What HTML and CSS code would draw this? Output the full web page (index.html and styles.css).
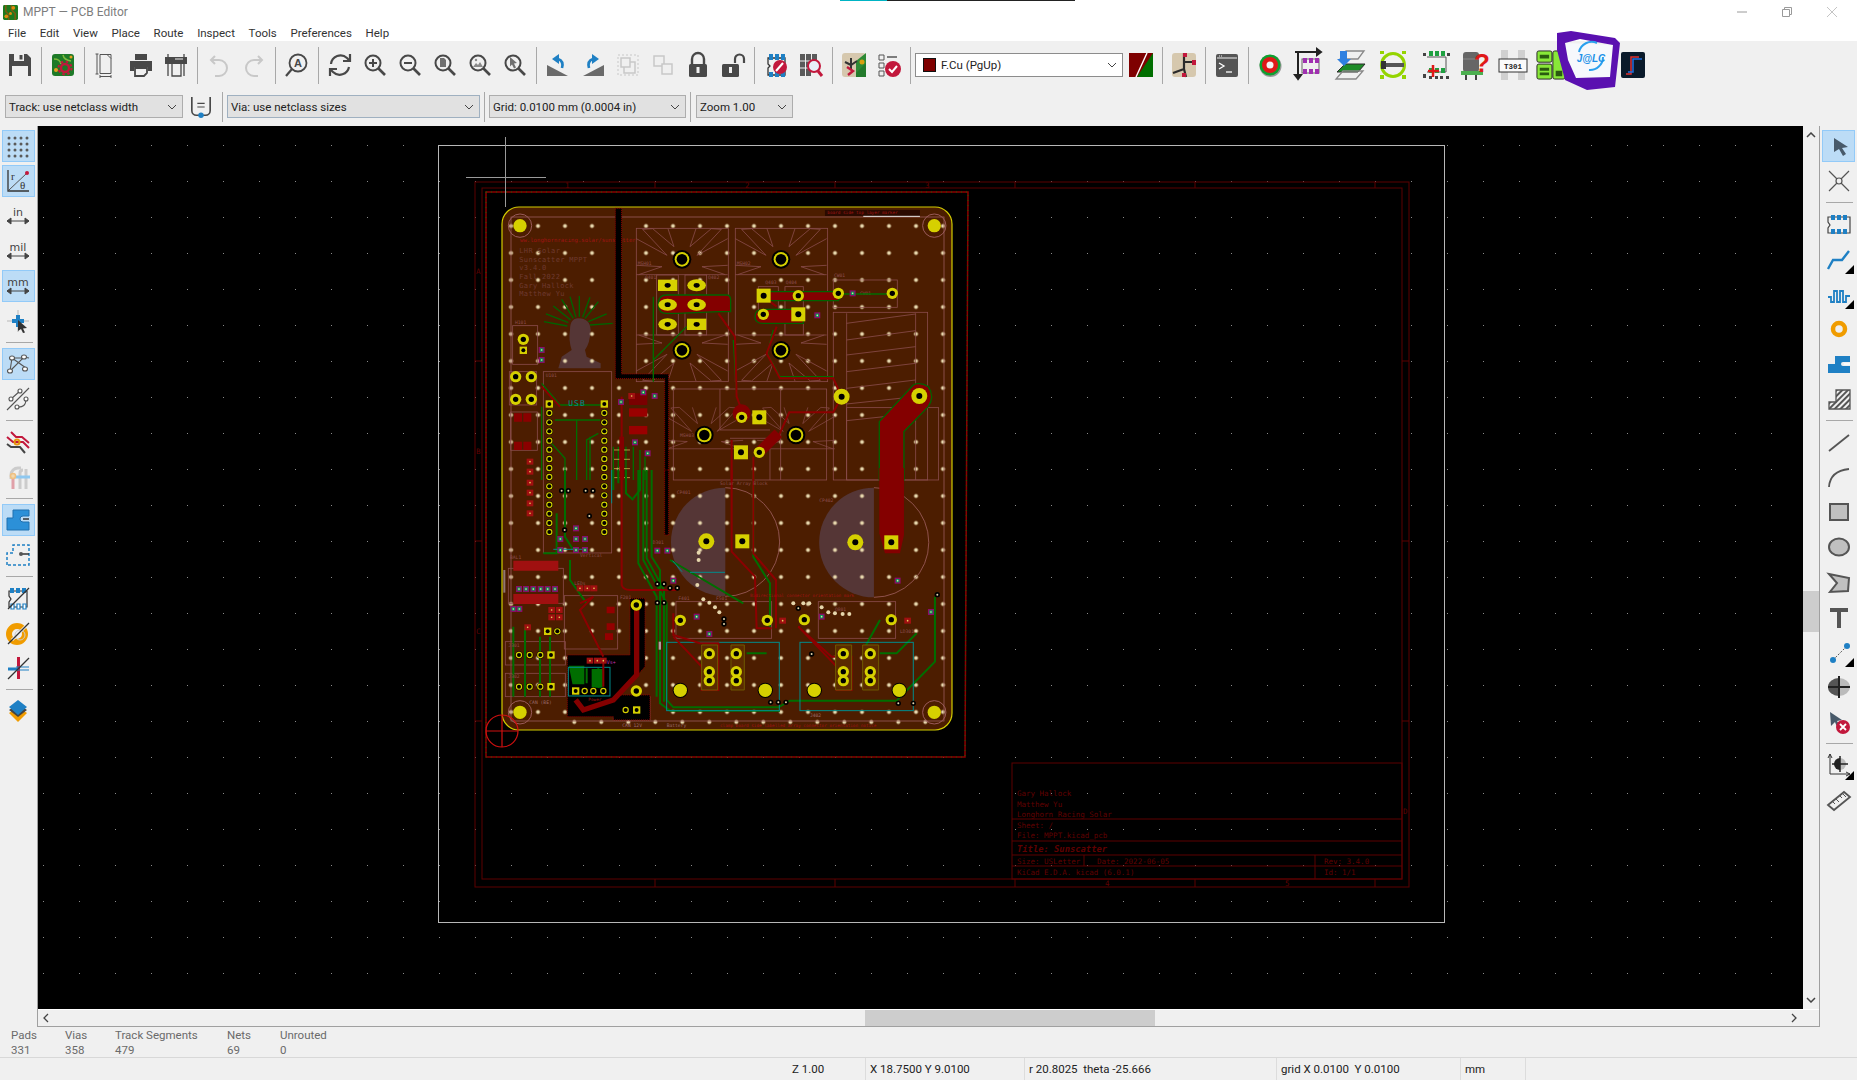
FILE: index.html
```html
<!DOCTYPE html>
<html lang="en">
<head>
<meta charset="utf-8">
<title>MPPT — PCB Editor</title>
<link rel="stylesheet" href="styles.css">
</head>
<body>
<svg class="defs" width="0" height="0" aria-hidden="true">
  <defs>
    <symbol id="chev" viewBox="0 0 10 6"><path d="M1 1l4 4 4-4" fill="none" stroke="#444" stroke-width="1"/></symbol>
    <g id="mag"><circle cx="10" cy="10" r="7.5" fill="none" stroke="#484848" stroke-width="2"/><path d="M15.5 15.5L22 22" stroke="#484848" stroke-width="2.6"/></g>
    <g id="slash"><path d="M2 23L23 2" stroke="#333" stroke-width="1.2"/></g>
    <pattern id="grid" width="36" height="36" patternUnits="userSpaceOnUse" x="7" y="1"><rect width="1" height="1" fill="#8a8a8a"/></pattern>
    <pattern id="stitch" width="27" height="27" patternUnits="userSpaceOnUse" x="11.5" y="23.5"><circle cx="13.5" cy="13.5" r="2" fill="#e6d6ac"/></pattern>
    <pattern id="stitch2" width="27" height="27" patternUnits="userSpaceOnUse" x="20.8" y="6.5"><circle cx="13.5" cy="13.5" r="2" fill="#e6d6ac"/></pattern>
    <pattern id="hatch" width="4" height="4" patternUnits="userSpaceOnUse" patternTransform="rotate(45)"><rect width="2" height="4" fill="#555"/></pattern>
    <g id="ring"><circle r="20" fill="#d6d000"/><circle r="35" fill="none" stroke="#9a5a5a" stroke-width="3"/></g>
    <g id="hs"><circle r="28" fill="#000"/><circle r="22" fill="#d6d000"/><circle r="16" fill="#000"/></g>
    <g id="pr"><circle r="17" fill="#d6d000"/><circle r="8" fill="#000"/></g>
    <g id="pl"><circle r="24" fill="#d6d000"/><circle r="9" fill="#000"/></g>
    <g id="ps"><rect x="-21" y="-21" width="42" height="42" fill="#d6d000"/><circle r="9" fill="#000"/></g>
    <g id="pb"><circle r="23" fill="#000"/><circle r="20" fill="#d6d000"/></g>
    <g id="po"><ellipse rx="28" ry="18" fill="#d6d000"/><ellipse rx="9" ry="7" fill="#000"/></g>
    <g id="pq"><rect x="-29" y="-17" width="58" height="34" fill="#d6d000"/><ellipse rx="9" ry="7" fill="#000"/></g>
    <g id="pin"><circle r="11" fill="#000"/><circle r="9.5" fill="#d6d000"/><circle r="6" fill="#000"/></g>
    <g id="pq2"><rect x="-11" y="-11" width="22" height="22" fill="#d6d000"/><circle r="6" fill="#000"/></g>
    <g id="vp"><rect x="-9" y="-9" width="18" height="18" fill="#8a0e6a"/><rect x="-5" y="-5" width="10" height="10" fill="#00a050"/><circle r="2.5" fill="#e6d6ac"/></g>
    <g id="vr"><rect x="-10" y="-9" width="20" height="18" fill="#a01010"/><circle r="2.5" fill="#e6d060"/></g>
    <g id="vb"><circle r="8" fill="#000"/><circle r="3" fill="#e6d6ac"/></g>
    <g id="dv"><circle r="6" fill="#e6d6ac"/></g>
    <g id="star" class="pcb-silk">
      <path d="M-137-62L-45-12-118-90-88-92-24-38-42-92M137-62L45-12 118-90 88-92 24-38 42-92M-137 18L-60 22-130 46M137 18L60 22 130 46M-137 46H137"/>
    </g>
    <g id="pins">
      <use href="#pin" y="27"/><use href="#pin" y="55"/><use href="#pin" y="82"/><use href="#pin" y="110"/><use href="#pin" y="137"/><use href="#pin" y="165"/><use href="#pin" y="192"/><use href="#pin" y="219"/><use href="#pin" y="247"/><use href="#pin" y="274"/><use href="#pin" y="302"/><use href="#pin" y="329"/><use href="#pin" y="357"/><use href="#pin" y="384"/>
    </g>
  </defs>
</svg>

<div class="app">
  <header class="titlebar">
    <svg class="app-icon" viewBox="0 0 16 16"><rect width="16" height="16" rx="1.5" fill="#1d7a1f"/><path d="M3 0v7l3 3v6M9 0v5l4 4v7" stroke="#7d5c10" stroke-width="1.6" fill="none"/><circle cx="3.5" cy="12" r="2" fill="#e08a10"/><circle cx="11" cy="3" r="2" fill="#e08a10"/><circle cx="8" cy="9" r="1.6" fill="#e08a10"/></svg>
    <span class="app-title">MPPT — PCB Editor</span>
    <div class="win-controls">
      <svg class="win-btn" viewBox="0 0 10 10"><path d="M0 5h10" stroke="#9a9a9a"/></svg>
      <svg class="win-btn" viewBox="0 0 10 10"><path d="M.5 2.5h7v7h-7zM2.5 2.5v-2h7v7h-2" fill="none" stroke="#9a9a9a"/></svg>
      <svg class="win-btn" viewBox="0 0 10 10"><path d="M0 0l10 10M10 0L0 10" stroke="#c4c4c4"/></svg>
    </div>
    <div class="accent"><i class="accent-teal"></i><i class="accent-dark"></i></div>
  </header>

  <nav class="menubar">
    <span>File</span><span>Edit</span><span>View</span><span>Place</span><span>Route</span><span>Inspect</span><span>Tools</span><span>Preferences</span><span>Help</span>
  </nav>

  <div class="toolbar-main">
    <span class="tb"><svg class="ic" viewBox="0 0 24 24"><path d="M1 1h18l4 4v18H1z" fill="#4a4a4a"/><rect x="6" y="1" width="10" height="7" fill="#f0f0f0"/><rect x="11.5" y="2" width="3" height="4.5" fill="#4a4a4a"/><rect x="4" y="13" width="16" height="10" fill="#f0f0f0"/></svg></span>
    <i class="vsep"></i>
    <span class="tb"><svg class="ic" viewBox="0 0 24 24"><rect x="1" y="1" width="22" height="22" rx="3" fill="#1e7a28"/><path d="M3 6q6 0 7 5M12 2q1 5 8 6" stroke="#7dba3c" fill="none" stroke-width="1.5"/><circle cx="5" cy="17" r="2" fill="#e8a020"/><circle cx="20" cy="4" r="1.5" fill="#e8a020"/><circle cx="14" cy="15" r="4" fill="none" stroke="#c2183c" stroke-width="2.5"/><circle cx="14" cy="15" r="6.500" fill="none" stroke="#c2183c" stroke-width="2" stroke-dasharray="2.5 2.600"/></svg></span>
    <i class="vsep"></i>
    <span class="tb"><svg class="ic" viewBox="0 0 24 24" fill="none" stroke="#555"><path d="M6 1.5h11v19H6zM13 1.5l4 4"/><path d="M3 1v20M1.5 1h3M1.5 21h3M6 23.5h11M6 22v3M17 22v3"/></svg></span>
    <span class="tb"><svg class="ic" viewBox="0 0 24 24"><rect x="6" y="1" width="12" height="6" fill="#484848"/><path d="M1 8h22v10h-4v-4H5v4H1z" fill="#484848"/><path d="M6 15h12v5l-3 3H6z" fill="none" stroke="#484848" stroke-width="1.8"/></svg></span>
    <span class="tb"><svg class="ic" viewBox="0 0 24 24"><path d="M1 4h22v7H1z" fill="#484848"/><path d="M4 1v22M20 1v22M8 10h9v13H8z" fill="none" stroke="#484848" stroke-width="1.3"/><path d="M11 6h8" stroke="#f0f0f0"/></svg></span>
    <i class="vsep"></i>
    <span class="tb"><svg class="ic" viewBox="0 0 24 24" fill="none" stroke="#c8c8c8" stroke-width="2"><path d="M8 3L4 7l4 4"/><path d="M4 7h8a7 7 0 0 1 0 16H8"/></svg></span>
    <span class="tb"><svg class="ic" viewBox="0 0 24 24" fill="none" stroke="#c8c8c8" stroke-width="2"><path d="M16 3l4 4-4 4"/><path d="M20 7h-8a7 7 0 0 0 0 16h4"/></svg></span>
    <i class="vsep"></i>
    <span class="tb"><svg class="ic" viewBox="0 0 24 24"><circle cx="13" cy="10" r="8.5" fill="none" stroke="#484848" stroke-width="1.8"/><path d="M7 16L1 23" stroke="#484848" stroke-width="2.2"/><text x="13" y="14" class="ic-a">A</text></svg></span>
    <i class="vsep"></i>
    <span class="tb"><svg class="ic" viewBox="0 0 24 24" fill="none" stroke="#484848" stroke-width="2.2"><path d="M3 11a9.5 9.5 0 0 1 16-6l3 3"/><path d="M22 1v7h-7"/><path d="M21 14a9.5 9.5 0 0 1-16 5l-3-3"/><path d="M2 23v-7h7"/></svg></span>
    <span class="tb"><svg class="ic" viewBox="0 0 24 24"><use href="#mag"/><path d="M10 6v8M6 10h8" stroke="#484848" stroke-width="2"/></svg></span>
    <span class="tb"><svg class="ic" viewBox="0 0 24 24"><use href="#mag"/><path d="M6 10h8" stroke="#484848" stroke-width="2"/></svg></span>
    <span class="tb"><svg class="ic" viewBox="0 0 24 24"><use href="#mag"/><path d="M7 5h4l2 2v7H7z" fill="#707070"/></svg></span>
    <span class="tb"><svg class="ic" viewBox="0 0 24 24"><use href="#mag"/><path d="M5 14l3-4 2 2 2-3 3 5z" fill="#8a8a8a"/><circle cx="8" cy="7" r="1.2" fill="#8a8a8a"/></svg></span>
    <span class="tb"><svg class="ic" viewBox="0 0 24 24"><use href="#mag"/><path d="M7 4l7 6-3 .5 2 4-2 1-2-4-2 2z" fill="#707070"/></svg></span>
    <i class="vsep"></i>
    <span class="tb"><svg class="ic" viewBox="0 0 24 24"><path d="M1 23V12l21 11z" fill="#6a6a6a"/><path d="M16 15Q18 8 12 6" fill="none" stroke="#1f80c4" stroke-width="2.6"/><path d="M13 1L6 6l7 5z" fill="#1f80c4"/></svg></span>
    <span class="tb"><svg class="ic" viewBox="0 0 24 24"><path d="M23 23V12L2 23z" fill="#6a6a6a"/><path d="M8 15Q6 8 12 6" fill="none" stroke="#1f80c4" stroke-width="2.6"/><path d="M11 1l7 5-7 5z" fill="#1f80c4"/></svg></span>
    <span class="tb"><svg class="ic" viewBox="0 0 24 24" fill="none" stroke="#c8c8c8"><rect x="2" y="2" width="20" height="20" stroke-dasharray="2 2"/><rect x="8" y="9" width="11" height="11" stroke-width="1.5"/><rect x="5" y="5" width="9" height="9" fill="#f0f0f0" stroke-width="1.5"/></svg></span>
    <span class="tb"><svg class="ic" viewBox="0 0 24 24" fill="none" stroke="#c8c8c8" stroke-width="1.5"><rect x="3" y="3" width="10" height="10"/><rect x="11" y="11" width="10" height="10" fill="#f0f0f0"/></svg></span>
    <span class="tb"><svg class="ic" viewBox="0 0 24 24"><path d="M6 11V6a6 6 0 0 1 12 0v5" fill="none" stroke="#484848" stroke-width="2.4"/><rect x="3" y="11" width="18" height="13" rx="1.5" fill="#484848"/><rect x="10.5" y="14" width="3" height="6" fill="#f0f0f0"/></svg></span>
    <span class="tb"><svg class="ic" viewBox="0 0 24 24"><path d="M14 10V6a4.5 4.5 0 0 1 9 0v4" fill="none" stroke="#484848" stroke-width="2.2"/><rect x="1" y="11" width="17" height="13" rx="1.5" fill="#484848"/><rect x="8" y="14" width="3" height="6" fill="#f0f0f0"/></svg></span>
    <i class="vsep"></i>
    <span class="tb"><svg class="ic" viewBox="0 0 24 24"><path d="M4 5h17v17H4v-7l2-2-2-2z" fill="none" stroke="#333" stroke-width="1.3"/><path d="M5 1h4v6H5zM11 1h4v6h-4zM17 1h4v6h-4zM5 19h4v5H5zM11 19h4v5h-4zM17 19h4v5h-4z" fill="#1f80c4"/><circle cx="16" cy="14" r="7" fill="#c2183c"/><path d="M12 18l7-8" stroke="#fff" stroke-width="2"/></svg></span>
    <span class="tb"><svg class="ic" viewBox="0 0 24 24"><rect x="1" y="1" width="5" height="22" fill="#5a5a5a"/><rect x="7" y="1" width="5" height="22" fill="#5a5a5a"/><rect x="13" y="1" width="5" height="6" fill="#5a5a5a"/><path d="M1 8h17M1 15h17" stroke="#f0f0f0"/><circle cx="15" cy="13" r="6" fill="#e8f0f8" stroke="#c2183c" stroke-width="2"/><path d="M19 18l4 5" stroke="#c2183c" stroke-width="3"/></svg></span>
    <i class="vsep"></i>
    <span class="tb"><svg class="ic" viewBox="0 0 24 24"><rect x="0" y="0" width="24" height="24" rx="3" fill="#d6c8ae"/><path d="M14 24V10h10v14z" fill="#237a2c"/><path d="M24 0v10L14 20V8z" fill="#2d8a35"/><circle cx="20" cy="9" r="2.5" fill="#d8a010"/><path d="M9 5v7M3 9l6 3 6-4M9 12v4" stroke="#333" stroke-width="2" fill="none"/><path d="M5 14l6 4-5 4" stroke="#c2183c" stroke-width="2.4" fill="none"/></svg></span>
    <span class="tb"><svg class="ic" viewBox="0 0 24 24"><path d="M2 2h5v5H2zM2 10h5v5H2zM2 18h5v5H2z" fill="none" stroke="#555"/><path d="M10 4h10M10 12h3" stroke="#555" stroke-width="1.3"/><circle cx="16" cy="16" r="8" fill="#c2183c"/><path d="M12 16l3 3 5-6" stroke="#fff" stroke-width="2" fill="none"/></svg></span>
    <i class="vsep"></i>
    <div class="combo-layer">
      <i class="swatch"></i><span>F.Cu (PgUp)</span>
      <svg class="chev"><use href="#chev"/></svg>
    </div>
    <span class="tb"><svg class="ic" viewBox="0 0 24 24"><rect width="24" height="24" fill="#7e0000"/><path d="M24 0v24H8z" fill="#006e00"/><path d="M7 24L18 0" stroke="#fff" stroke-width="1.4"/></svg></span>
    <i class="vsep"></i>
    <span class="tb"><svg class="ic" viewBox="0 0 24 24"><rect width="24" height="24" rx="3" fill="#d6c8ae"/><path d="M12 0v9M12 9v7M1 20l11-4M12 9l12 0M12 16l2 8" stroke="#2a2a2a" stroke-width="2.2" fill="none"/><path d="M11 0h4v4h-4zM20 7h4v5h-4zM10 20h4v4h-4z" fill="#c2183c"/></svg></span>
    <i class="vsep"></i>
    <span class="tb"><svg class="ic" viewBox="0 0 24 24"><rect x="1" y="1" width="22" height="23" rx="2" fill="#555"/><path d="M2 5h20" stroke="#f0f0f0"/><path d="M4 3h4" stroke="#f0f0f0" stroke-dasharray="1 1"/><path d="M4 10l5 3-5 3" fill="none" stroke="#fff" stroke-width="1.3"/><path d="M11 19h6" stroke="#fff" stroke-width="1.3"/></svg></span>
    <i class="vsep"></i>
    <span class="tb"><svg class="ic" viewBox="0 0 24 24"><circle cx="12.5" cy="13" r="11" fill="#999"/><circle cx="12" cy="12" r="10.5" fill="#0fa030"/><circle cx="12" cy="12" r="8" fill="#e01818"/><circle cx="12" cy="12" r="3.5" fill="#f4f4f4"/></svg></span>
    <span class="tb tb-w41"><svg class="ic ic-30" viewBox="0 0 30 30"><path d="M5 1v28M2 2h24M5 29l-3-4h6zM28 2l-4-3v6z" stroke="#222" stroke-width="2" fill="#222"/><rect x="9" y="9" width="17" height="14" fill="none" stroke="#666"/><path d="M10 8h4v5h-4zM16 8h4v5h-4zM22 8h4v5h-4zM10 19h4v5h-4zM16 19h4v5h-4zM22 19h4v5h-4z" fill="#a030b0"/></svg></span>
    <span class="tb tb-w43"><svg class="ic ic-30" viewBox="0 0 30 30"><path d="M11 1h18l-6 8H5z" fill="none" stroke="#888" stroke-width="1.3"/><path d="M10 14h20l-7 8H2z" fill="#1e8c28" stroke="#2a2a2a"/><path d="M8 21h20l-7 8H1z" fill="none" stroke="#888" stroke-width="1.3"/><path d="M5 1h7v8h4l-7 7-7-7h3z" fill="#2f80e0"/></svg></span>
    <span class="tb tb-w43"><svg class="ic ic-30" viewBox="0 0 30 30"><circle cx="15" cy="15" r="11.5" fill="none" stroke="#94d400" stroke-width="3"/><path d="M2 1h4v3H2zM24 1h4v3h-4zM2 25h4v4H2zM24 25h4v4h-4z" fill="#94d400"/><path d="M6 15h20" stroke="#555" stroke-width="4"/><rect x="3" y="11" width="5" height="8" fill="#333"/></svg></span>
    <span class="tb tb-w43"><svg class="ic ic-30" viewBox="0 0 30 30"><path d="M6 7h19v15H6" fill="none" stroke="#555"/><path d="M8 1h4v5H8zM14 1h4v5h-4zM20 1h4v5h-4zM8 18h4v5H8zM14 18h4v5h-4zM20 18h4v5h-4z" fill="#1ea040"/><path d="M2 24h3v4H2zM8 26h3v3H8zM19 26h3v3h-3zM25 26h3v3h-3zM2 3h3v3H2zM26 3h3v3h-3zM14 26h3v3h-3z" fill="#444"/><path d="M12 15v12M7 21h11" stroke="#e01818" stroke-width="2.5"/></svg></span>
    <span class="tb tb-w38"><svg class="ic ic-30" viewBox="0 0 30 30"><rect x="2" y="2" width="16" height="20" rx="3" fill="#666"/><path d="M2 9h16" stroke="#888"/><rect x="0" y="21" width="22" height="4" fill="#4caf50"/><path d="M5 25v5M15 25v5" stroke="#444" stroke-width="2"/><text x="21" y="22" class="ic-q">?</text></svg></span>
    <span class="tb"><svg class="ic ic-30" viewBox="0 0 30 30"><path d="M3 0h7v30H3zM20 0h7v30h-7z" fill="#d0d0d0"/><rect x="1" y="9" width="28" height="13" fill="#fafafa" stroke="#333"/><text x="15" y="18.5" class="ic-t">T301</text></svg></span>
    <span class="tb tb-w41"><svg class="ic ic-30" viewBox="0 0 30 32"><rect x="0" y="1" width="16" height="12" rx="2" fill="#88e838" stroke="#222"/><rect x="0" y="15" width="16" height="16" rx="2" fill="#88e838" stroke="#222"/><rect x="17" y="1" width="13" height="30" rx="2" fill="#88e838" stroke="#222"/><path d="M3 5h10v4H3zM3 19h10v3H3zM3 24h10v3H3zM20 22h7v6h-7z" fill="#2a5a10"/></svg></span>
    <span class="tb tb-w41"></span>
    <span class="tb tb-w41"><svg class="ic ic-26" viewBox="0 0 24 26"><rect width="24" height="26" rx="2" fill="#0a1a2a"/><path d="M5 22h5V5h8" fill="none" stroke="#e03030" stroke-width="1.5"/><path d="M7 20h5V7h9" fill="none" stroke="#2070e0" stroke-width="1.5"/></svg></span>
  </div>

  <svg class="jlc" viewBox="0 0 76 68">
    <path class="jlc-fill" d="M15 18L63 20 60 52 26 53 18 35z"/>
    <path class="jlc-ring" fill-rule="evenodd" d="M7 8L21 6 65 13 70 18 65 62 37 65 15 55 7 25zM15 18L18 35 26 53 60 52 63 20 30 14z"/>
    <path d="M29 27a13 13 0 0 1 18-9M53 32a13 13 0 0 1-14 13" fill="none" stroke="#2aa0ee" stroke-width="2"/>
    <text x="41" y="37" class="jlc-text">J@LC</text>
  </svg>

  <div class="toolbar-aux">
    <div class="combo combo-track"><span>Track: use netclass width</span><svg class="chev"><use href="#chev"/></svg></div>
    <span class="aux-ic"><svg class="ic" viewBox="0 0 24 24" fill="none"><path d="M2 1v15a5 5 0 0 0 5 5h10a5 5 0 0 0 5-5V1" stroke="#484848" stroke-width="1.8"/><path d="M8 8h8M8 12h8" stroke="#484848" stroke-width="1.2"/><circle cx="12" cy="21" r="3" fill="#1f80c4"/></svg></span>
    <i class="vsep vsep-aux"></i>
    <div class="combo combo-via"><span>Via: use netclass sizes</span><svg class="chev"><use href="#chev"/></svg></div>
    <i class="vsep vsep-aux"></i>
    <div class="combo combo-grid"><span>Grid: 0.0100 mm (0.0004 in)</span><svg class="chev"><use href="#chev"/></svg></div>
    <i class="vsep vsep-aux"></i>
    <div class="combo combo-zoom"><span>Zoom 1.00</span><svg class="chev"><use href="#chev"/></svg></div>
  </div>

  <div class="workspace">
    <aside class="side side-left">
      <span class="sb on"><svg class="ic" viewBox="0 0 24 24" fill="#5a5a5a"><circle cx="3" cy="4" r="1.5"/><circle cx="9" cy="4" r="1.5"/><circle cx="15" cy="4" r="1.5"/><circle cx="21" cy="4" r="1.5"/><circle cx="3" cy="10" r="1.5"/><circle cx="9" cy="10" r="1.5"/><circle cx="15" cy="10" r="1.5"/><circle cx="21" cy="10" r="1.5"/><circle cx="3" cy="16" r="1.5"/><circle cx="9" cy="16" r="1.5"/><circle cx="15" cy="16" r="1.5"/><circle cx="21" cy="16" r="1.5"/><circle cx="3" cy="22" r="1.5"/><circle cx="9" cy="22" r="1.5"/><circle cx="15" cy="22" r="1.5"/><circle cx="21" cy="22" r="1.5"/></svg></span>
      <span class="sb on"><svg class="ic" viewBox="0 0 24 24"><path d="M2 1v21h21" fill="none" stroke="#333" stroke-width="1.3"/><path d="M3 21L21 4" stroke="#555"/><circle cx="21" cy="4" r="2" fill="#c2183c"/><text x="5" y="11" class="ic-r">r</text><text x="14" y="20" class="ic-r">θ</text></svg></span>
      <span class="sb"><svg class="ic" viewBox="0 0 24 24"><text x="12" y="12" class="ic-u">in</text><path d="M1 17h22M5 14l-4 3 4 3zM19 14l4 3-4 3z" stroke="#444" fill="#444"/></svg></span>
      <span class="sb"><svg class="ic" viewBox="0 0 24 24"><text x="12" y="12" class="ic-u">mil</text><path d="M1 17h22M5 14l-4 3 4 3zM19 14l4 3-4 3z" stroke="#444" fill="#444"/></svg></span>
      <span class="sb on"><svg class="ic" viewBox="0 0 24 24"><text x="12" y="12" class="ic-u">mm</text><path d="M1 17h22M5 14l-4 3 4 3zM19 14l4 3-4 3z" stroke="#444" fill="#444"/></svg></span>
      <span class="sb"><svg class="ic" viewBox="0 0 24 24"><path d="M12 1v22M1 12h22" stroke="#aaa" stroke-width=".8"/><path d="M6 10h12v4H6zM10 6h4v12h-4z" fill="#1f80c4"/><path d="M12 11l9 8-4 .5 2 4-2 .5-2-4-3 2z" fill="#333"/></svg></span>
      <i class="hsep"></i>
      <span class="sb on"><svg class="ic" viewBox="0 0 24 24" fill="none" stroke="#555" stroke-width="1.1"><path d="M6 6l14 10M4 19L18 5l5 1M6 6h12M4 19l2-13"/><ellipse cx="6" cy="6" rx="2.5" ry="2" fill="#fff"/><ellipse cx="18" cy="5" rx="2.5" ry="2" fill="#fff"/><ellipse cx="4" cy="19" rx="2.5" ry="2" fill="#fff"/><ellipse cx="19" cy="17" rx="2.5" ry="2" fill="#fff"/></svg></span>
      <span class="sb"><svg class="ic" viewBox="0 0 24 24" fill="none" stroke="#555" stroke-width="1.1"><path d="M1 23L23 1M5 12L14 4M11 20q9 1 9-8"/><circle cx="5" cy="12" r="2" fill="#fff"/><circle cx="14" cy="4" r="2" fill="#fff"/><circle cx="11" cy="20" r="2" fill="#fff"/><circle cx="20" cy="12" r="2" fill="#fff"/></svg></span>
      <i class="hsep"></i>
      <span class="sb"><svg class="ic" viewBox="0 0 24 24" fill="none" stroke-width="2"><path d="M5 2l5 5h6l7 6" stroke="#c2183c"/><path d="M1 7l6 5h10l6 6" stroke="#c2183c"/><path d="M1 14l4 3h9l5 6" stroke="#444"/><circle cx="11" cy="12" r="2.5" stroke="#e8960c"/></svg></span>
      <span class="sb"><svg class="ic" viewBox="0 0 24 24" fill="none" stroke-width="3"><path d="M5 14V10a7 7 0 0 1 7-7h3" stroke="#ccc"/><path d="M14 24V8q0-3 3-3" stroke="#ccc"/><path d="M20 24V4" stroke="#ccc"/><path d="M7 12h17" stroke="#8ec8f0"/><path d="M7 24V14" stroke="#e0a0a8"/><circle cx="7" cy="11" r="2.5" fill="#f0d8b0" stroke="#f0c080" stroke-width="1.5"/></svg></span>
      <i class="hsep"></i>
      <span class="sb on"><svg class="ic" viewBox="0 0 24 24"><path d="M1 22V10h6V2h16v6h-6a3 3 0 0 0 0 6h6v8z" fill="#2c90d8" stroke="#1f70b0"/><path d="M23 11h-6" stroke="#333" stroke-width="1.5"/></svg></span>
      <span class="sb"><svg class="ic" viewBox="0 0 24 24"><path d="M1 22V10h6V2h16v20z" fill="none" stroke="#1f80c4" stroke-width="1.5" stroke-dasharray="3 2"/><path d="M14 11h9" stroke="#333" stroke-width="1.5"/><circle cx="15" cy="11" r="2" fill="#555"/></svg></span>
      <i class="hsep"></i>
      <span class="sb"><svg class="ic" viewBox="0 0 24 24"><path d="M3 5h18v16H3v-5l2-3-2-3z" fill="none" stroke="#333" stroke-width="1.2"/><path d="M4 2h4v5H4zM10 2h4v5h-4zM16 2h4v5h-4z" fill="#1f80c4"/><path d="M5 18h3v5H5zM11 18h3v5h-3zM17 18h3v5h-3z" fill="#fff" stroke="#1f80c4" stroke-width="1.2"/><use href="#slash"/></svg></span>
      <span class="sb"><svg class="ic" viewBox="0 0 24 24"><circle cx="11" cy="13" r="8" fill="none" stroke="#f09c00" stroke-width="6"/><path d="M6 19L22 3" stroke="#f0f0f0" stroke-width="3"/><circle cx="14" cy="14" r="5" fill="none" stroke="#ccc"/><use href="#slash"/></svg></span>
      <span class="sb"><svg class="ic" viewBox="0 0 24 24"><path d="M11 1h3v22h-3z" fill="#c2183c"/><path d="M2 13h10" stroke="#1f80c4" stroke-width="3"/><path d="M10 11h13M10 14h13" stroke="#1f80c4"/><use href="#slash"/></svg></span>
      <i class="hsep"></i>
      <span class="sb"><svg class="ic" viewBox="0 0 24 24"><path d="M12 8l9 6-9 9-9-9z" fill="#f09c00"/><path d="M12 5l9 6-9 7-9-7z" fill="#444"/><path d="M12 1l9 7-9 8-9-8z" fill="#1f80c4"/></svg></span>
    </aside>

    <div class="center">
      <div class="canvas-row">
        <svg class="canvas" viewBox="38 126 1765 883">
          <rect x="38" y="126" width="1765" height="883" fill="#000"/>
          <rect x="38" y="126" width="1765" height="883" fill="url(#grid)"/>

          <rect x="438.5" y="145.5" width="1006" height="777" class="page"/>
          <g class="wks">
            <rect x="475" y="182" width="934" height="705"/>
            <rect x="482" y="188" width="920" height="691"/>
            <rect x="1012" y="763" width="390" height="116"/>
            <path d="M1012 819H1402M1012 841H1402M1012 855H1402M1012 866H1402M1084 855V866M1315 855V879"/>
            <path d="M655 182V188M835 182V188M1015 182V188M1195 182V188M1375 182V188M655 879V887M835 879V887M1015 879V887M1195 879V887M1375 879V887M475 361H482M475 541H482M475 721H482M1402 361H1409M1402 541H1409M1402 721H1409"/>
          </g>
          <g class="wks-t">
            <text x="565" y="188">1</text><text x="745" y="188">2</text><text x="925" y="188">3</text><text x="1105" y="886">4</text><text x="1285" y="886">5</text>
            <text x="476" y="274">A</text><text x="476" y="454">B</text><text x="476" y="634">C</text><text x="1403" y="814">D</text>
            <text x="1017" y="796">Gary Hallock</text>
            <text x="1017" y="807">Matthew Yu</text>
            <text x="1017" y="817">Longhorn Racing Solar</text>
            <text x="1017" y="828">Sheet: /</text>
            <text x="1017" y="838">File: MPPT.kicad_pcb</text>
            <text x="1017" y="852" class="wks-title">Title: Sunscatter</text>
            <text x="1017" y="864">Size: USLetter</text>
            <text x="1097" y="864">Date: 2022-06-05</text>
            <text x="1324" y="864">Rev: 3.4.0</text>
            <text x="1017" y="875">KiCad E.D.A.  kicad (6.0.1)</text>
            <text x="1324" y="875">Id: 1/1</text>
          </g>

          <!-- board -->
          <path d="M486 192H968L965 757H486Z" class="keepout"/>
          <path d="M486 192H968L965 757H486Z" class="keepout2"/>
          <rect x="502" y="207" width="450" height="523" rx="17" fill="#4c1d00"/>

          <!-- filled silk sits under the stitching vias -->
          <g transform="translate(470 180) scale(.3333)">
            <path class="mauve" d="M300 450Q300 415 325 415 360 415 362 450 360 490 345 510L350 530 392 550V565H265L275 530 305 510Q295 480 300 450Z"/>
          </g>
          <g transform="translate(470 470) scale(.3333)">
            <path class="mauve" d="M766 53A163 163 0 0 0 766 379Z"/>
            <path class="mauve" d="M1212 53A163 163 0 0 0 1212 382Z"/>
          </g>

          <rect x="497.5" y="212.5" width="459" height="513" fill="url(#stitch)"/>
          <rect x="560" y="718" width="368" height="8" fill="url(#stitch2)"/>
          <rect x="511" y="217" width="433" height="504" class="pcb-silk-p"/>
          <rect x="502" y="207" width="450" height="523" rx="17" class="edge"/>

          <g transform="translate(470 180) scale(.3333)">
            <!-- heatsinks -->
            <g class="pcb-silk">
              <rect x="499" y="145" width="276" height="460"/><rect x="796" y="145" width="277" height="460"/>
              <rect x="610" y="627" width="460" height="273"/>
              <path d="M750 627V750H900M932 627V900M780 775H900V900"/>
              <rect x="560" y="285" width="65" height="180"/><rect x="645" y="285" width="65" height="180"/>
              <rect x="865" y="320" width="60" height="80"/><rect x="945" y="320" width="55" height="145"/>
              <rect x="1090" y="300" width="192" height="82"/>
              <rect x="1090" y="397" width="283" height="503"/>
              <path d="M1130 400V900M1337 400V900M1130 430L1337 402M1130 480L1337 452M1130 525L1337 500M1130 575L1337 550M1130 625L1337 600M1130 672L1337 650M1130 722L1337 700"/>
              <rect x="1130" y="683" width="276" height="217"/>
              <rect x="128" y="437" width="75" height="116"/>
              <rect x="118" y="575" width="82" height="100"/>
              <rect x="220" y="575" width="205" height="544"/>
              <rect x="122" y="696" width="80" height="115"/>
            </g>
            <use href="#star" x="636" y="238"/><use href="#star" x="933" y="238"/>
            <use href="#star" transform="translate(636 511) scale(1 -1)"/><use href="#star" transform="translate(933 511) scale(1 -1)"/>
            <use href="#star" transform="translate(703 765) scale(.85 .9)"/><use href="#star" transform="translate(978 765) scale(.85 .9)"/>

            <path class="gr3" d="M222 425L292 438M228 402L295 428M250 378L302 420M275 358L310 415M300 350L318 412M328 348V410M360 352L338 412M385 365L345 415M410 402L355 425M428 430L360 435"/>

            <!-- silk text -->
            <g class="silk-t">
              <text x="148" y="218">LHR Solar</text>
              <text x="148" y="245">Sunscatter MPPT</text>
              <text x="148" y="271">v3.4.0</text>
              <text x="148" y="296">Fall 2022</text>
              <text x="148" y="323">Gary Hallock</text>
              <text x="148" y="349">Matthew Yu</text>
            </g>
            <text x="150" y="186" class="red-t">ww.longhornracing.solar/sunscatter</text>
            <rect x="1065" y="90" width="285" height="18" fill="#2a0a00"/>
            <path d="M1180 109H1350" stroke="#e8e8e8" stroke-width="3"/>
            <text x="1072" y="102" class="red-t red-s">board side top layer marker</text>
            <g class="tiny">
              <text x="503" y="254">MSH01</text><text x="800" y="254">MSH02</text><text x="525" y="298">Q401</text><text x="714" y="298">Q402</text><text x="886" y="313">Q403</text><text x="947" y="313">Q404</text><text x="1092" y="292">CW01</text><text x="1170" y="346">CW01</text><text x="227" y="592">U101</text><text x="135" y="432">H101</text><text x="630" y="770">MSH03</text>
            </g>

            <!-- isolation slot -->
            <path class="slot" d="M436 85H455V582H596V900H584V596H436Z"/>

            <!-- green -->
            <g class="gr">
              <path d="M550 350V605M620 470L550 540V600M650 440L560 530M910 450L892 520 930 590H1090M215 610L270 675H400M360 770V900M385 760L350 780V900M255 720H390M215 680V900M1120 342H1265"/>
              <path d="M790 480L800 640M850 830V900"/>
              <path d="M240 785L285 835V900M320 720V900M430 800V900M445 800V900M468 800V900M490 800V900M510 810V900M525 830V900"/>
            </g>

            <!-- copper -->
            <path class="cu" d="M590 345H770Q782 345 782 360V395H745L620 400H590Q565 400 565 372 565 345 590 345Z"/>
            <path class="cu" d="M868 335H1100L1120 340 1105 362H868Z"/>
            <path class="cu" d="M880 388H1000V430H880Q855 430 855 410 855 388 880 388Z"/>
            <path class="cu" d="M1330 615Q1350 605 1375 620 1395 650 1375 680L1302 755V900H1228V725Z"/>
            <g class="trk">
              <path d="M745 400L795 470 800 650 815 690"/>
              <path d="M920 440L890 520 930 595H1090L1115 650"/>
              <path d="M1115 650L1090 697H958L925 770"/>
              <path d="M455 650V900"/>
              <path d="M785 780V900M850 830V900"/>
              <path d="M215 620L270 680M900 365L920 380"/>
            </g>
            <circle cx="815" cy="700" r="27" fill="#840000"/>
            <path d="M868 817L925 760" stroke="#840000" stroke-width="32"/>
            <path d="M432 810H480M432 838H480M432 866H480M432 893H480" stroke="#e8d060" stroke-width="2"/>
            <rect x="448" y="770" width="14" height="130" fill="#840000"/>
            <rect x="477" y="640" width="55" height="35" fill="#7a0000"/>
            <rect x="477" y="685" width="55" height="25" fill="#9a0000"/>
            <rect x="477" y="738" width="55" height="25" fill="#9a0000"/>
            <path d="M132 700h24v25h-24zM160 700h24v25h-24zM132 785h24v25h-24zM160 785h24v25h-24z" fill="#8a0000"/>

            <!-- pads -->
            <use href="#ring" x="150" y="137"/><use href="#ring" x="1393" y="137"/>
            <use href="#hs" x="636" y="238"/><use href="#hs" x="933" y="238"/><use href="#hs" x="636" y="511"/><use href="#hs" x="933" y="511"/><use href="#hs" x="703" y="765"/><use href="#hs" x="978" y="765"/>
            <use href="#pq" x="593" y="316"/><use href="#po" x="680" y="316"/><use href="#po" x="593" y="374"/><use href="#po" x="680" y="374"/><use href="#po" x="593" y="433"/><use href="#pq" x="680" y="433"/>
            <use href="#ps" x="881" y="347"/><use href="#pr" x="985" y="347"/><use href="#pr" x="1105" y="340"/><use href="#pr" x="1267" y="340"/>
            <use href="#pr" x="880" y="403"/><use href="#ps" x="985" y="403"/>
            <use href="#vp" x="1148" y="340"/><use href="#vp" x="1042" y="406"/><use href="#vp" x="215" y="510"/><use href="#vp" x="215" y="540"/><use href="#vp" x="520" y="637"/><use href="#vp" x="554" y="648"/><use href="#vp" x="453" y="666"/><use href="#vp" x="495" y="787"/><use href="#vp" x="533" y="820"/>
            <use href="#vr" x="485" y="648"/><use href="#vr" x="180" y="845"/><use href="#vr" x="180" y="875"/>
            <use href="#pl" x="1115" y="650"/><use href="#pl" x="1348" y="648"/>
            <use href="#pr" x="160" y="478"/><use href="#pq2" x="160" y="511"/>
            <use href="#pr" x="137" y="590"/><use href="#pr" x="184" y="590"/><use href="#pr" x="137" y="658"/><use href="#pr" x="184" y="658"/>
            <use href="#pr" x="815" y="712"/><use href="#ps" x="868" y="712"/><use href="#ps" x="813" y="817"/><use href="#pr" x="868" y="817"/>
            <use href="#pq2" x="238" y="672"/><use href="#pq2" x="403" y="672"/>
            <use href="#pins" x="238" y="672"/><use href="#pins" x="403" y="672"/>
            <text x="295" y="678" class="teal-t">USB</text>
          </g>

          <g transform="translate(470 470) scale(.3333)">
            <g class="pcb-silk pk">
              <path d="M766 53A163 163 0 0 1 766 379"/>
              <path d="M1212 53A163 163 0 0 1 1212 382"/>
              <rect x="106" y="515" width="180" height="70"/><rect x="106" y="610" width="180" height="70"/>
              <rect x="115" y="295" width="165" height="105"/>
              <rect x="283" y="377" width="160" height="160"/>
              <rect x="618" y="395" width="287" height="110"/>
              <rect x="1045" y="395" width="232" height="110"/>
              <rect x="430" y="680" width="110" height="70"/>
            </g>
            <!-- black zone -->
            <path class="slot" d="M584 0H596V195H584Z"/>
            <path class="slot" d="M480 385H525V590L450 675H540V750H430V740H292V555H480Z"/>
            <!-- green bundle -->
            <g class="gr gr-b">
              <path d="M520 0V270L590 400V690L610 712H925L960 692H1280L1395 575V380"/>
              <path d="M545 0V260L570 300V700L600 722H930"/>
              <path d="M505 0V280L560 380V680"/>
              <path d="M530 0V265L582 360V695"/>
              <path d="M850 0V260L900 340V470M1230 450L1180 540"/>
              <path d="M600 270L820 400M830 550H890M1230 550H1280L1340 490"/>
              <path d="M300 270V330L350 400M130 470V680M165 470V680M210 500V680M240 500V680M260 130V250H220"/>
              <path d="M285 0V200L310 240M430 0V60M445 0V40M468 0V70L490 90M510 0V60L490 85"/>
              <path d="M350 595V640M385 595V650L370 640"/>
              <path d="M300 590H340V640H310ZM368 600H395V650H368Z" class="gr-fill"/>
            </g>
            <!-- teal -->
            <g class="teal">
              <path d="M608 272L636 305M660 307H765"/>
              <rect x="590" y="517" width="338" height="205"/>
              <rect x="990" y="517" width="340" height="205"/>
              <rect x="295" y="592" width="125" height="86"/>
              <path d="M250 238H340M425 0V100"/>
            </g>
            <!-- red -->
            <g class="trk">
              <path d="M455 0V345Q460 360 480 360H620"/>
              <path d="M785 0V245L855 320 860 475H905"/>
              <path d="M850 0V250L918 330V475"/>
              <path d="M610 430V495L690 520H745V660H695V590L610 500"/>
              <path d="M985 470L1085 560H1145V660H1100V590L985 470"/>
              <path d="M330 400L370 380 330 420 400 560"/>
              <path d="M400 570V650"/>
            </g>
            <path d="M1228 -6H1302V195L1290 250H1245L1228 190Z" fill="#840000"/>
            <path d="M500 405V615L430 690 340 720 317 690" class="thick"/>
            <path d="M130 272h135v30H130zM130 372h135v30H130z" fill="#a01010"/>
            <path d="M410 410h24v20h-24zM410 460h24v20h-24zM405 490h24v20h-24z" fill="#940000"/>
            <path d="M783 525h40v135h-40z" class="slotp"/>
            <path d="M695 525h48v135h-48zM1097 525h48v135h-48zM1178 525h48v135h-48z" class="slotp"/>
            <!-- pads -->
            <use href="#ring" x="150" y="727"/><use href="#ring" x="1393" y="727"/>
            <use href="#pl" x="709" y="214"/><use href="#ps" x="817" y="214"/><use href="#pl" x="1156" y="217"/><use href="#ps" x="1264" y="217"/>
            <use href="#pr" x="631" y="451"/><use href="#pr" x="892" y="451"/><use href="#pr" x="1003" y="449"/><use href="#pr" x="1264" y="449"/>
            <use href="#pr" x="718" y="551"/><use href="#pr" x="718" y="605"/><use href="#pr" x="718" y="632"/><use href="#pr" x="799" y="551"/><use href="#pr" x="799" y="605"/><use href="#pr" x="799" y="632"/><use href="#pr" x="1120" y="551"/><use href="#pr" x="1120" y="605"/><use href="#pr" x="1120" y="632"/><use href="#pr" x="1201" y="551"/><use href="#pr" x="1201" y="605"/><use href="#pr" x="1201" y="632"/>
            <use href="#pb" x="631" y="661"/><use href="#pb" x="886" y="661"/><use href="#pb" x="1033" y="661"/><use href="#pb" x="1288" y="661"/>
            <use href="#pr" x="499" y="405"/><use href="#pr" x="499" y="663"/>
            <use href="#pq2" x="233" y="484"/><use href="#pin" x="262" y="484"/>
            <use href="#pin" x="147" y="555"/><use href="#pin" x="179" y="555"/><use href="#pin" x="211" y="555"/><use href="#pq2" x="243" y="555"/>
            <use href="#pin" x="147" y="650"/><use href="#pin" x="179" y="650"/><use href="#pin" x="211" y="650"/><use href="#pq2" x="243" y="650"/>
            <use href="#pq2" x="317" y="663"/><use href="#pin" x="344" y="663"/><use href="#pin" x="370" y="663"/><use href="#pin" x="400" y="663"/>
            <use href="#pin" x="467" y="720"/><use href="#pq2" x="500" y="720"/>
            <use href="#vp" x="562" y="242"/><use href="#vp" x="592" y="242"/><use href="#vp" x="147" y="357"/><use href="#vp" x="168" y="357"/><use href="#vp" x="190" y="357"/><use href="#vp" x="212" y="357"/><use href="#vp" x="233" y="357"/><use href="#vp" x="255" y="357"/>
            <use href="#vp" x="318" y="175"/><use href="#vp" x="271" y="207"/><use href="#vp" x="318" y="207"/><use href="#vp" x="345" y="207"/><use href="#vp" x="271" y="240"/><use href="#vp" x="318" y="240"/><use href="#vp" x="345" y="240"/><use href="#vp" x="680" y="440"/><use href="#vp" x="1055" y="440"/><use href="#vp" x="1283" y="332"/><use href="#vp" x="1383" y="426"/><use href="#vp" x="130" y="417"/><use href="#vp" x="148" y="417"/><use href="#vp" x="718" y="492"/><use href="#vp" x="610" y="332"/>
            <use href="#vr" x="180" y="38"/><use href="#vr" x="180" y="68"/><use href="#vr" x="180" y="100"/><use href="#vr" x="180" y="130"/><use href="#vr" x="330" y="355"/><use href="#vr" x="352" y="355"/><use href="#vr" x="372" y="355"/><use href="#vr" x="245" y="420"/><use href="#vr" x="268" y="420"/><use href="#vr" x="245" y="442"/><use href="#vr" x="268" y="442"/><use href="#vr" x="173" y="472"/><use href="#vr" x="360" y="572"/><use href="#vr" x="382" y="572"/><use href="#vr" x="400" y="572"/><use href="#vr" x="938" y="452"/><use href="#vr" x="1313" y="452"/>
            <use href="#vb" x="275" y="62"/><use href="#vb" x="295" y="62"/><use href="#vb" x="347" y="62"/><use href="#vb" x="369" y="62"/><use href="#vb" x="358" y="138"/><use href="#vb" x="284" y="180"/><use href="#vb" x="562" y="342"/><use href="#vb" x="582" y="342"/><use href="#vb" x="562" y="398"/><use href="#vb" x="582" y="398"/><use href="#vb" x="600" y="354"/><use href="#vb" x="622" y="354"/><use href="#vb" x="902" y="697"/><use href="#vb" x="925" y="697"/><use href="#vb" x="948" y="697"/><use href="#vb" x="1285" y="700"/><use href="#vb" x="1330" y="700"/><use href="#vb" x="1025" y="552"/><use href="#vb" x="985" y="415"/><use href="#vb" x="1402" y="374"/><use href="#vb" x="762" y="447"/><use href="#vb" x="762" y="462"/>
            <use href="#dv" x="686" y="248"/><use href="#dv" x="686" y="270"/><use href="#dv" x="682" y="345"/><use href="#dv" x="700" y="388"/><use href="#dv" x="718" y="398"/><use href="#dv" x="735" y="412"/><use href="#dv" x="748" y="427"/><use href="#dv" x="970" y="400"/><use href="#dv" x="1000" y="400"/><use href="#dv" x="1018" y="400"/><use href="#dv" x="1055" y="412"/><use href="#dv" x="1075" y="427"/><use href="#dv" x="1095" y="430"/><use href="#dv" x="1118" y="432"/><use href="#dv" x="1138" y="432"/>
            <rect x="100" y="300" width="6" height="68" fill="#b0a0a0" opacity=".7"/>
            <rect x="566" y="515" width="7" height="24" fill="#b0a0a0"/>
            <g class="tiny">
              <text x="120" y="268">BAL1</text><text x="620" y="72">CP401</text><text x="1048" y="97">CP402</text><text x="450" y="388">F201</text><text x="625" y="390">F401</text><text x="738" y="389">F501</text><text x="1095" y="422">Q801</text><text x="313" y="345">LEDs</text><text x="548" y="222">D301</text><text x="750" y="45">Solar Array Block</text><text x="1290" y="490">LD301</text><text x="330" y="262">Vertical</text><text x="115" y="530">J301</text><text x="115" y="625">J302</text>
            </g>
            <text x="178" y="702" class="silk-s">CAN (BE)</text>
            <text x="457" y="770" class="silk-s">CAN 12V</text>
            <text x="590" y="771" class="silk-s">Battery</text>
            <text x="1020" y="740" class="silk-s">J402</text>
            <text x="750" y="771" class="red-t red-s">clamp board side labelled array connector orientation notice</text>
            <text x="840" y="380" class="red-t red-s">Bidirectional connector orientation mark</text>
            <text x="410" y="582" class="mag-t">Vs+</text>
            <text x="355" y="693" class="red-t red-s">Power</text>
          </g>

          <!-- origin + cursor -->
          <g class="origin"><circle cx="502" cy="731" r="16"/><path d="M486 731H518M502 715V747"/></g>
          <path class="cursor" d="M505.5 137V207M466 177.5H546"/>
        </svg>

        <div class="vscroll">
          <svg class="arr" viewBox="0 0 10 6"><path d="M1 5l4-4 4 4" fill="none" stroke="#444" stroke-width="1.5"/></svg>
          <div class="vtrack"><i class="vthumb"></i></div>
          <svg class="arr" viewBox="0 0 10 6"><path d="M1 1l4 4 4-4" fill="none" stroke="#444" stroke-width="1.5"/></svg>
        </div>
      </div>
      <div class="hscroll">
        <svg class="arr-h" viewBox="0 0 6 10"><path d="M5 1L1 5l4 4" fill="none" stroke="#444" stroke-width="1.3"/></svg>
        <div class="htrack"><i class="hthumb"></i></div>
        <svg class="arr-h" viewBox="0 0 6 10"><path d="M1 1l4 4-4 4" fill="none" stroke="#444" stroke-width="1.3"/></svg>
      </div>
    </div>

    <aside class="side side-right">
      <span class="sb on"><svg class="ic" viewBox="0 0 24 24"><path d="M7 4l14 9-6 1 4 6-3 2-4-7-5 3z" fill="#485a6a"/></svg></span>
      <span class="sb"><svg class="ic" viewBox="0 0 24 24" fill="none" stroke="#555" stroke-width="1.2"><path d="M2 2l8 8M22 2l-8 8M2 22l8-8M22 22l-8-8"/><circle cx="12" cy="12" r="3"/></svg></span>
      <i class="hsep"></i>
      <span class="sb"><svg class="ic" viewBox="0 0 24 24"><path d="M1 5h22v16H1v-5l2-3-2-3z" fill="none" stroke="#444" stroke-width="1.2"/><path d="M4 3h4v5H4zM10 3h4v5h-4zM16 3h4v5h-4zM4 17h4v5H4zM10 17h4v5h-4zM16 17h4v5h-4z" fill="#1f80c4"/></svg></span>
      <span class="sb corner"><svg class="ic" viewBox="0 0 24 24" fill="none"><path d="M1 22l5-9h9l7-9" stroke="#1f80c4" stroke-width="2.4"/></svg></span>
      <span class="sb corner"><svg class="ic" viewBox="0 0 24 24" fill="none"><path d="M1 15h3v5h3V9h3v11h3V9h3v11h3v-6h4" stroke="#1f80c4" stroke-width="1.8"/></svg></span>
      <span class="sb"><svg class="ic" viewBox="0 0 24 24"><circle cx="12" cy="12" r="6" fill="none" stroke="#f09c00" stroke-width="4.5"/></svg></span>
      <span class="sb"><svg class="ic" viewBox="0 0 24 24"><path d="M1 21V12h7V4h15v6h-7a2 2 0 0 0 0 4h7v7z" fill="#1f80c4"/><path d="M17 12h6" stroke="#fff" stroke-width="1.5"/></svg></span>
      <span class="sb"><svg class="ic" viewBox="0 0 24 24"><path d="M2 22v-7h7V3h14v19z" fill="url(#hatch)" stroke="#555" stroke-width="1.3"/></svg></span>
      <i class="hsep"></i>
      <span class="sb"><svg class="ic" viewBox="0 0 24 24"><path d="M2 21L22 5" stroke="#555" stroke-width="1.8"/></svg></span>
      <span class="sb"><svg class="ic" viewBox="0 0 24 24"><path d="M2 22Q3 6 22 4" fill="none" stroke="#555" stroke-width="1.8"/></svg></span>
      <span class="sb"><svg class="ic" viewBox="0 0 24 24"><rect x="3" y="4" width="18" height="16" fill="#c0c0c0" stroke="#555" stroke-width="2"/></svg></span>
      <span class="sb"><svg class="ic" viewBox="0 0 24 24"><ellipse cx="12" cy="12" rx="10" ry="8.5" fill="#c0c0c0" stroke="#555" stroke-width="2"/></svg></span>
      <span class="sb"><svg class="ic" viewBox="0 0 24 24"><path d="M2 4l20 4-1 13-18 1 7-9z" fill="#c0c0c0" stroke="#555" stroke-width="2"/></svg></span>
      <span class="sb"><svg class="ic" viewBox="0 0 24 24"><path d="M3 3h18v4h-7v16h-4V7H3z" fill="#555"/></svg></span>
      <span class="sb corner"><svg class="ic" viewBox="0 0 24 24"><path d="M6 20L20 6" stroke="#555" stroke-dasharray="2 1.5"/><circle cx="6" cy="20" r="3" fill="#1f80c4"/><circle cx="20" cy="6" r="3" fill="#1f80c4"/></svg></span>
      <span class="sb"><svg class="ic" viewBox="0 0 24 24"><ellipse cx="12" cy="12" rx="11" ry="9" fill="#bbb"/><path d="M12 3a11 9 0 0 0-11 9 11 9 0 0 0 11 9z" fill="#555"/><path d="M12 1v22M1 12h22" stroke="#222" stroke-width="2"/></svg></span>
      <span class="sb"><svg class="ic" viewBox="0 0 24 24"><path d="M3 2l12 8-5 1 3 5-3 1-2-5-4 4z" fill="#485a6a"/><circle cx="16" cy="17" r="7" fill="#c2183c"/><path d="M13 14l6 6M19 14l-6 6" stroke="#fff" stroke-width="1.8"/></svg></span>
      <i class="hsep"></i>
      <span class="sb corner"><svg class="ic" viewBox="0 0 24 24"><path d="M3 1v20h20M1 5l2-4 2 4M19 19l4 2-4 2" fill="none" stroke="#333"/><path d="M13 5a6 6 0 0 0 0 12z" fill="#222"/><path d="M13 5a6 6 0 0 1 0 12z" fill="#bbb"/><path d="M13 3v16M5 11h16" stroke="#222" stroke-width="1.5"/></svg></span>
      <span class="sb"><svg class="ic" viewBox="0 0 24 24"><path d="M1 17L17 4l6 5L7 22z" fill="none" stroke="#555" stroke-width="1.8"/><path d="M6 14l2 2M9 11l3 3M13 8l2 2M16 6l3 3" stroke="#555"/></svg></span>
    </aside>
  </div>

  <section class="msgpanel">
    <div class="msg m-pads"><b>Pads</b><b>331</b></div>
    <div class="msg m-vias"><b>Vias</b><b>358</b></div>
    <div class="msg m-track"><b>Track Segments</b><b>479</b></div>
    <div class="msg m-nets"><b>Nets</b><b>69</b></div>
    <div class="msg"><b>Unrouted</b><b>0</b></div>
  </section>

  <footer class="statusbar">
    <span class="st st-z">Z 1.00</span>
    <span class="st st-xy">X 18.7500 Y 9.0100</span>
    <span class="st st-r">r 20.8025  theta -25.666</span>
    <span class="st st-g">grid X 0.0100  Y 0.0100</span>
    <span class="st st-u">mm</span>
    <span class="st st-e"></span>
  </footer>
</div>
</body>
</html>
```

FILE: styles.css
```css
* { box-sizing: border-box; }
html, body { margin: 0; padding: 0; height: 100%; overflow: hidden; background: #f0f0f0; }
body { font: 11.5px Roboto, "Liberation Sans", sans-serif; color: #222; }
.defs { position: absolute; }
.app { width: 1857px; height: 1080px; display: flex; flex-direction: column; position: relative; }

/* title bar */
.titlebar { height: 24px; background: #fff; display: flex; align-items: center; padding-left: 3px; position: relative; }
.app-icon { width: 15px; height: 15px; }
.app-title { margin-left: 5px; color: #7d7d7d; font-size: 12px; }
.win-controls { margin-left: auto; display: flex; gap: 35px; padding-right: 20px; }
.win-btn { width: 10px; height: 10px; }
.accent { position: absolute; left: 840px; top: 0; display: flex; height: 1px; }
.accent-teal { width: 47px; background: #00b4c4; }
.accent-dark { width: 188px; background: #222; }

/* menu */
.menubar { height: 17px; background: #fff; display: flex; gap: 13.7px; padding-left: 8px; align-items: center; font-size: 11.5px; color: #333; }

/* top toolbars */
.toolbar-main { height: 48px; background: #f0f0f0; display: flex; align-items: center; padding-left: 2.5px; }
.tb { width: 35px; height: 37px; display: flex; align-items: center; justify-content: center; flex: none; }
.tb-w38 { width: 38px; }
.tb-w41 { width: 41px; }
.tb-w43 { width: 43px; }
.ic { width: 24px; height: 24px; display: block; overflow: visible; }
.ic-30 { width: 30px; height: 30px; }
.ic-26 { width: 24px; height: 26px; }
.vsep { width: 8px; height: 37px; flex: none; position: relative; display: block; }
.vsep::before { content: ""; position: absolute; left: 3.5px; top: 0; bottom: 0; width: 1px; background: #a8a8a8; }
.vsep-aux { height: 30px; }
.ic-a { font: 700 11px "Liberation Sans", sans-serif; text-anchor: middle; fill: #484848; }
.ic-q { font: 700 26px "Liberation Sans", sans-serif; text-anchor: middle; fill: #e01818; }
.ic-t { font: 700 7.5px "Liberation Mono", monospace; text-anchor: middle; fill: #222; }
.ic-r { font: 11px "Liberation Serif", serif; fill: #333; }
.ic-u { font: 11px "DejaVu Sans", sans-serif; text-anchor: middle; fill: #444; }

.combo-layer { width: 208px; height: 24px; margin-left: .5px; background: #fff; border: 1px solid #8c8c8c; display: flex; align-items: center; padding-left: 7px; flex: none; }
.combo-layer span { margin-left: 5px; }
.swatch { width: 13px; height: 14px; background: #7e0000; border: 1px solid #111; display: block; }
.chev { width: 10px; height: 6px; margin-left: auto; margin-right: 5px; flex: none; }

.toolbar-aux { height: 37px; background: #f0f0f0; display: flex; align-items: flex-start; padding: 6px 0 0 5px; }
.combo { height: 23px; background: #e1e1e1; border: 1px solid #adadad; display: flex; align-items: center; padding-left: 3px; flex: none; font-size: 11.5px; }
.combo-track { width: 178px; }
.combo-via { width: 253px; margin-left: 1px; border-color: #9fb0c0; }
.combo-grid { width: 197px; margin-left: 1px; }
.combo-zoom { width: 97px; margin-left: 2px; }
.aux-ic { width: 35px; display: flex; justify-content: center; flex: none; }
.aux-ic .ic { width: 22px; height: 24px; }
.toolbar-aux .vsep { margin-top: -3px; }

/* JLC overlay */
.jlc { position: absolute; left: 1550px; top: 25px; width: 76px; height: 68px; }
.jlc-fill { fill: #f6f8fc; }
.jlc-ring { fill: #5a10b0; }
.jlc-text { font: italic 700 10px "Liberation Sans", sans-serif; fill: #2090e8; text-anchor: middle; }

/* workspace */
.workspace { display: flex; height: 901px; }
.side { flex: none; display: flex; flex-direction: column; gap: 3px; padding-top: 4px; background: #f0f0f0; }
.side-left { width: 38px; padding-left: 2px; border-right: 1px solid #a0a0a0; }
.side-right { width: 37px; padding-left: 2px; }
.sb { width: 33px; height: 32px; display: flex; align-items: center; justify-content: center; border: 1px solid transparent; position: relative; flex: none; }
.side-left .sb { margin-left: -.5px; }
.sb .ic { width: 24px; height: 24px; }
.sb.on { background: #bcdcf6; border: 1px solid #92caf8; }
.corner::after { content: ""; position: absolute; right: 0; bottom: 0; border-style: solid; border-width: 0 0 9px 9px; border-color: transparent transparent #000 transparent; }
.hsep { display: block; height: 1px; margin: 2px 4px; background: #a8a8a8; flex: none; }

.center { flex: none; width: 1782px; display: flex; flex-direction: column; border-right: 1px solid #a0a0a0; border-bottom: 1px solid #a0a0a0; }
.canvas-row { display: flex; height: 883px; }
.canvas { width: 1765px; height: 883px; display: block; flex: none; }

.vscroll { width: 16px; display: flex; flex-direction: column; align-items: center; background: #f0f0f0; }
.arr { width: 10px; height: 6px; margin: 6px 0; flex: none; }
.vtrack { flex: 1; width: 100%; position: relative; }
.vthumb { position: absolute; left: 0; right: 0; top: 447px; height: 41px; background: #cdcdcd; }

.hscroll { flex: 1; display: flex; align-items: center; background: #f0f0f0; border-top: 1px solid #fff; padding-right: 17px; }
.arr-h { width: 6px; height: 10px; margin: 0 5px; flex: none; }
.htrack { flex: 1; height: 100%; position: relative; }
.hthumb { position: absolute; top: 0; bottom: 0; left: 811px; width: 290px; background: #cdcdcd; }

/* message panel */
.msgpanel { height: 31px; flex: none; display: flex; padding: 2px 0 0 11px; border-bottom: 1px solid #d8d8d8; }
.msg { display: flex; flex-direction: column; gap: 2px; color: #6a6a6a; }
.msg b { font-weight: 400; font-size: 11.5px; line-height: 13px; }
.m-pads { width: 54px; }
.m-vias { width: 50px; }
.m-track { width: 112px; }
.m-nets { width: 53px; }

/* status bar */
.statusbar { flex: 1; display: flex; padding-left: 787px; }
.st { border-left: 1px solid #dcdcdc; padding: 4px 0 0 4px; white-space: pre; color: #222; font-size: 11.5px; height: 22px; }
.st-z { width: 78px; border-left-color: transparent; }
.st-xy { width: 159px; }
.st-r { width: 252px; }
.st-g { width: 184px; }
.st-u { width: 65px; }
.st-e { width: 100px; }

/* canvas content */
.page { fill: none; stroke: #b8b8b8; stroke-width: 1; }
.wks rect, .wks path { fill: none; stroke: #5c0000; stroke-width: 1; }
.wks-t text { font: 7.5px "DejaVu Sans Mono", monospace; fill: #600000; }
.wks-t .wks-title { font-size: 8.8px; font-weight: 700; font-style: italic; }
.keepout { fill: #000; stroke: #8c0000; stroke-width: 1.5; }
.keepout2 { fill: none; stroke: #1a6000; stroke-width: 1; stroke-dasharray: 1 4; }
.edge { fill: none; stroke: #d2cc00; stroke-width: 1.2; }
.pcb-silk-p { fill: none; stroke: #9a5a5a; stroke-width: .8; }
.pcb-silk rect, .pcb-silk path { fill: none; stroke: #8a4c4c; stroke-width: 2.4; }
.pk path { stroke: #a06060; }
.mauve { fill: #553636; }
.gr3 { fill: none; stroke: #006400; stroke-width: 4; }
.silk-t text { font: 21px "DejaVu Sans Mono", monospace; fill: #6e3a30; letter-spacing: 1px; }
.red-t { font: 17px "DejaVu Sans Mono", monospace; fill: #a01414; }
.red-s { font-size: 13px; }
.tiny text { font: 14px "DejaVu Sans Mono", monospace; fill: #8a4c4c; }
.silk-s { font: 14px "DejaVu Sans Mono", monospace; fill: #9a6a6a; }
.mag-t { font: 15px "DejaVu Sans Mono", monospace; fill: #c030b0; }
.teal-t { font: 24px "DejaVu Sans Mono", monospace; fill: #00908a; letter-spacing: 3px; }
.slot { fill: #000; stroke: #8c0000; stroke-width: 3; stroke-dasharray: 3 3; }
.gr path { fill: none; stroke: #006e00; stroke-width: 4; }
.gr-b path { stroke-width: 6; }
.gr-b .gr-fill { fill: #006e00; }
.cu { fill: #840000; stroke: #006400; stroke-width: 4; }
.trk path { fill: none; stroke: #8c0000; stroke-width: 6; }
.thick { fill: none; stroke: #840000; stroke-width: 16; }
.slotp { fill: #5a2a00; stroke: #6f5a00; stroke-width: 3; }
.teal rect, .teal path { fill: none; stroke: #008c8c; stroke-width: 3; }
.origin { fill: none; stroke: #d01010; stroke-width: 1.2; }
.cursor { fill: none; stroke: #9a9a9a; stroke-width: 1; }
```
